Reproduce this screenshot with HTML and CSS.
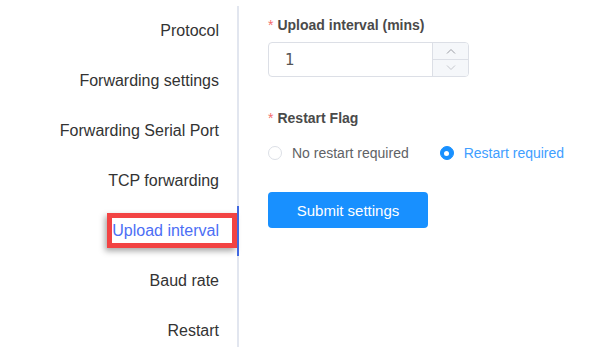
FILE: index.html
```html
<!DOCTYPE html>
<html>
<head>
<meta charset="utf-8">
<link rel="stylesheet" href="styles.css">
</head>
<body>
<div class="page">
  <nav class="nav">
    <div class="nav-item">Protocol</div>
    <div class="nav-item">Forwarding settings</div>
    <div class="nav-item">Forwarding Serial Port</div>
    <div class="nav-item">TCP forwarding</div>
    <div class="nav-item active">Upload interval<span class="annot"></span></div>
    <div class="nav-item">Baud rate</div>
    <div class="nav-item">Restart</div>
  </nav>
  <main class="form">
    <div class="label label-first"><span class="req">*</span>Upload interval (mins)</div>
    <div class="num-input">
      <div class="num-value">1</div>
      <div class="num-ctrls">
        <div class="num-btn">
          <svg width="10" height="6" viewBox="0 0 10 6"><path d="M1 5.5 L5 1.5 L9 5.5" fill="none" stroke="#9a9ca3" stroke-width="1"/></svg>
        </div>
        <div class="num-btn num-btn-down">
          <svg width="10" height="6" viewBox="0 0 10 6"><path d="M1 0.5 L5 4.5 L9 0.5" fill="none" stroke="#c4c6cc" stroke-width="1"/></svg>
        </div>
      </div>
    </div>
    <div class="label label-second"><span class="req">*</span>Restart Flag</div>
    <div class="radios">
      <label class="radio"><span class="dot"></span><span class="radio-text">No restart required</span></label>
      <label class="radio checked"><span class="dot"></span><span class="radio-text">Restart required</span></label>
    </div>
    <button class="submit">Submit settings</button>
  </main>
</div>
</body>
</html>
```
FILE: styles.css
```css
* { box-sizing: border-box; }
html, body { margin: 0; padding: 0; background: #fff; }
body { font-family: "Liberation Sans", Arial, sans-serif; }
.page { display: flex; width: 599px; height: 347px; overflow: hidden; }
.nav {
  width: 239px;
  flex: none;
  margin-top: 6px;
  border-right: 2px solid #e2e6ef;
  display: flex;
  flex-direction: column;
}
.nav-item {
  position: relative;
  height: 50px;
  flex: none;
  display: flex;
  align-items: center;
  justify-content: flex-end;
  padding-right: 18px;
  font-size: 16px;
  color: #333333;
}
.nav-item.active { color: #4c6ef5; }
.nav-item.active::after {
  content: "";
  position: absolute;
  right: -2px;
  top: 0;
  width: 2px;
  height: 50px;
  background: #4169e1;
}
.annot {
  position: absolute;
  right: 0;
  top: 7px;
  width: 130px;
  height: 35px;
  border: 5px solid #f24343;
  box-shadow: -2px 3px 6px rgba(0,0,0,0.35);
}
.form { padding-left: 29px; display: flex; flex-direction: column; align-items: flex-start; }
.label {
  font-size: 14px;
  font-weight: bold;
  color: #4a4a4a;
  line-height: 22px;
  height: 22px;
}
.label-first { margin-top: 14px; }
.label-second { margin-top: 30px; }
.req { color: #f56c6c; font-weight: normal; margin-right: 4px; }
.num-input {
  margin-top: 6px;
  width: 201px;
  height: 35px;
  border: 1px solid #dcdfe6;
  border-radius: 4px;
  display: flex;
  overflow: hidden;
}
.num-value {
  flex: 1;
  padding-left: 16px;
  display: flex;
  align-items: center;
  font-family: "DejaVu Sans", sans-serif;
  font-size: 15px;
  color: #555;
}
.num-ctrls {
  width: 36px;
  border-left: 1px solid #dcdfe6;
  background: #f5f7fa;
  display: flex;
  flex-direction: column;
}
.num-btn { flex: 1; display: flex; align-items: center; justify-content: center; }
.num-btn-down { border-top: 1px solid #dcdfe6; }
.radios { margin-top: 13px; display: flex; align-items: center; height: 22px; gap: 31px; }
.radio { display: flex; align-items: center; font-size: 14px; color: #606266; }
.dot {
  width: 14px; height: 14px;
  border: 1px solid #dcdfe6;
  border-radius: 50%;
  margin-right: 10px;
  display: inline-block;
  position: relative;
}
.radio.checked .dot { background: #1890ff; border-color: #1890ff; }
.radio.checked .dot::after {
  content: "";
  position: absolute;
  left: 50%; top: 50%;
  width: 5px; height: 5px;
  margin: -2.5px 0 0 -2.5px;
  border-radius: 50%;
  background: #fff;
}
.radio.checked .radio-text { color: #409eff; }
.submit {
  margin-top: 28px;
  width: 160px;
  height: 36px;
  border: none;
  border-radius: 4px;
  background: #1890ff;
  color: #fff;
  font-family: "Liberation Sans", Arial, sans-serif;
  font-size: 15px;
  padding: 0;
}
```
